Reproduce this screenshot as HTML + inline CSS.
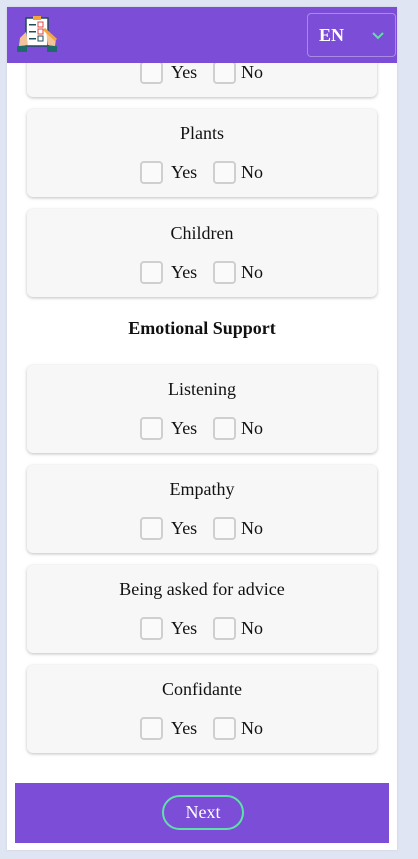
<!DOCTYPE html>
<html><head><style>
*{margin:0;padding:0;box-sizing:border-box}
body{width:418px;height:859px;background:#dfe5f2;font-family:"Times New Roman","Liberation Serif","DejaVu Serif",serif;position:relative;overflow:hidden;color:#111}
.panel{position:absolute;left:7px;top:7px;width:390px;height:843px;background:#fff;box-shadow:0 0 2px #ccd}
.hdr{position:absolute;left:7px;top:7px;width:390px;height:56px;background:#7c4dd6;z-index:2}
.en{position:absolute;left:300px;top:6px;width:89px;height:44px;border:1px solid #a98be6;border-radius:4px;color:#fff;font-weight:bold;font-size:18px}
.card{position:absolute;left:27px;width:350px;height:88px;background:#f7f7f7;border-radius:6px;box-shadow:0 1px 3px rgba(0,0,0,.25)}
.lbl{position:absolute;left:0;right:0;top:14px;text-align:center;font-size:18px}
.row{position:absolute;top:52px;left:113px;font-size:18px}
.cb{position:absolute;width:23px;height:23px;border:2px solid #cfcfcf;border-radius:4px;background:#fafafa}
.t{position:absolute;top:1px}
.h{position:absolute;left:0;width:404px;text-align:center;top:318px;font-weight:bold;font-size:18px}
.foot{position:absolute;left:15px;top:783px;width:374px;height:60px;background:#7c4dd6}
.next{position:absolute;left:147px;top:12px;width:82px;height:35px;border:2px solid #5fe0a8;border-radius:18px;color:#fff;font-size:18px;text-align:center;line-height:31px}
</style></head><body>
<div class="panel"></div>
<div class="hdr">
<svg style="position:absolute;left:9px;top:8px" width="46" height="42" viewBox="0 0 46 42">
<rect x="10" y="3" width="22" height="28" fill="#fff" stroke="#1f4d57" stroke-width="1.5"/>
<rect x="17" y="1" width="8" height="4" fill="#f2a53a"/>
<rect x="13" y="9" width="7" height="1.5" fill="#1f4d57"/><rect x="22" y="7" width="5" height="5" fill="none" stroke="#d44" stroke-width="1"/>
<rect x="13" y="16" width="7" height="1.5" fill="#1f4d57"/><rect x="22" y="14" width="5" height="5" fill="none" stroke="#d44" stroke-width="1"/>
<rect x="13" y="23" width="7" height="1.5" fill="#1f4d57"/><rect x="22" y="21" width="5" height="5" fill="none" stroke="#1f4d57" stroke-width="1"/>
<path d="M3 31 L4 23 L10 17 L12 30 Z" fill="#f2c49b"/><path d="M30 16 L40 24 L39 31 L32 30 Z" fill="#f2c49b"/>
<path d="M28 14 L40 25" stroke="#f2a53a" stroke-width="3"/>
<rect x="1" y="31" width="10" height="6" fill="#1f6a6a"/><rect x="31" y="31" width="10" height="6" fill="#1f6a6a"/>
</svg>
<div class="en"><span style="position:absolute;left:11px;top:11px">EN</span>
<svg style="position:absolute;left:63px;top:17px" width="14" height="10" viewBox="0 0 14 10"><path d="M2 2 L7 7 L12 2" fill="none" stroke="#5fe0a8" stroke-width="2"/></svg></div>
</div>

<div class="card" style="top:9px"><div class="row"><div class="cb" style="left:0;top:0"></div><span class="t" style="left:31px">Yes</span><div class="cb" style="left:73px;top:0"></div><span class="t" style="left:101px">No</span></div></div>
<div class="card" style="top:109px"><div class="lbl">Plants</div><div class="row"><div class="cb" style="left:0;top:0"></div><span class="t" style="left:31px">Yes</span><div class="cb" style="left:73px;top:0"></div><span class="t" style="left:101px">No</span></div></div>
<div class="card" style="top:209px"><div class="lbl">Children</div><div class="row"><div class="cb" style="left:0;top:0"></div><span class="t" style="left:31px">Yes</span><div class="cb" style="left:73px;top:0"></div><span class="t" style="left:101px">No</span></div></div>
<div class="h">Emotional Support</div>
<div class="card" style="top:365px"><div class="lbl">Listening</div><div class="row"><div class="cb" style="left:0;top:0"></div><span class="t" style="left:31px">Yes</span><div class="cb" style="left:73px;top:0"></div><span class="t" style="left:101px">No</span></div></div>
<div class="card" style="top:465px"><div class="lbl">Empathy</div><div class="row"><div class="cb" style="left:0;top:0"></div><span class="t" style="left:31px">Yes</span><div class="cb" style="left:73px;top:0"></div><span class="t" style="left:101px">No</span></div></div>
<div class="card" style="top:565px"><div class="lbl">Being asked for advice</div><div class="row"><div class="cb" style="left:0;top:0"></div><span class="t" style="left:31px">Yes</span><div class="cb" style="left:73px;top:0"></div><span class="t" style="left:101px">No</span></div></div>
<div class="card" style="top:665px"><div class="lbl">Confidante</div><div class="row"><div class="cb" style="left:0;top:0"></div><span class="t" style="left:31px">Yes</span><div class="cb" style="left:73px;top:0"></div><span class="t" style="left:101px">No</span></div></div>
<div class="foot"><div class="next">Next</div></div>
</body></html>
